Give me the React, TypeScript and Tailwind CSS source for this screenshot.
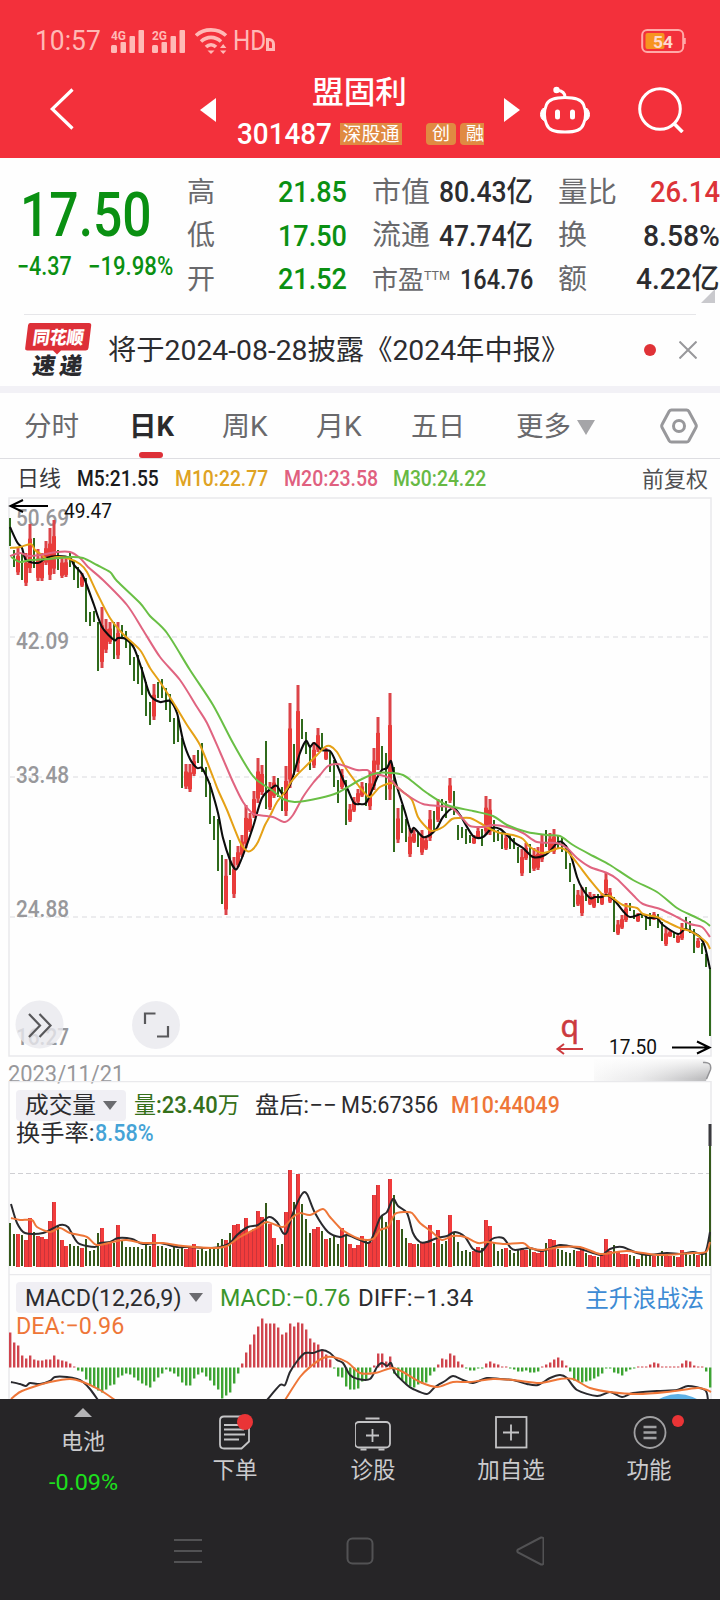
import { useLayoutEffect, useRef, useState } from "react";
import type { ReactNode } from "react";

// [high, low] of every candle
const CANDLES: [number, number][] = [
  [518, 546], [550, 567], [548, 575], [553, 580], [553, 586], [524, 573], [538, 568], [549, 581],
  [553, 581], [541, 565], [528, 580], [520, 574], [550, 570], [556, 578], [556, 577], [553, 567],
  [560, 580], [567, 588], [573, 587], [578, 622], [612, 626], [611, 622], [622, 671], [607, 668],
  [619, 653], [622, 644], [622, 659], [622, 659], [625, 637], [631, 648], [642, 665], [657, 681],
  [655, 684], [667, 695], [682, 716], [702, 725], [684, 720], [682, 698], [679, 698], [688, 710],
  [694, 722], [718, 744], [717, 742], [738, 788], [764, 789], [764, 792], [755, 776], [750, 763],
  [743, 772], [767, 797], [783, 824], [816, 840], [819, 871], [855, 904], [859, 915], [840, 875],
  [857, 898], [846, 867], [835, 857], [805, 848], [813, 832], [791, 818], [758, 803], [765, 795],
  [741, 809], [782, 810], [776, 798], [778, 797], [787, 811], [766, 816], [703, 788], [744, 775],
  [685, 772], [719, 739], [732, 754], [745, 770], [742, 768], [728, 752], [733, 748], [748, 760],
  [752, 772], [760, 787], [780, 803], [769, 789], [780, 825], [804, 822], [797, 812], [789, 803],
  [782, 797], [783, 806], [772, 810], [748, 790], [717, 770], [746, 770], [753, 800], [693, 800],
  [767, 852], [808, 843], [805, 833], [819, 842], [828, 857], [830, 843], [832, 847], [830, 855],
  [836, 850], [810, 841], [811, 830], [799, 822], [799, 811], [801, 818], [778, 803], [791, 815],
  [825, 840], [827, 838], [829, 844], [835, 843], [835, 844], [828, 838], [829, 846], [796, 835],
  [799, 835], [820, 842], [830, 841], [832, 849], [833, 850], [835, 849], [838, 849], [847, 863],
  [849, 876], [843, 860], [844, 873], [848, 871], [847, 870], [835, 862], [830, 847], [833, 852],
  [829, 854], [835, 848], [838, 852], [845, 869], [863, 882], [884, 907], [890, 906], [887, 916],
  [887, 901], [892, 905], [894, 908], [894, 903], [893, 905], [873, 895], [888, 903], [897, 932],
  [920, 935], [915, 929], [903, 922], [903, 911], [910, 919], [913, 922], [913, 918], [915, 930],
  [913, 926], [912, 920], [914, 928], [922, 941], [928, 946], [930, 937], [932, 938], [933, 943],
  [923, 940], [917, 930], [921, 933], [929, 953], [938, 948], [943, 954], [954, 967], [968, 1036],
];

const UP_DAYS = new Set([
  2, 4, 5, 7, 8, 9, 10, 11, 13, 14, 18, 23, 24, 25, 27, 36, 44, 45, 46, 54, 56, 57, 58, 59, 60, 61,
  62, 63, 65, 66, 69, 70, 72, 76, 77, 79, 83, 85, 86, 87, 88, 90, 91, 92, 95, 97, 100, 101, 103,
  104, 105, 107, 110, 116, 117, 119, 120, 124, 128, 129, 131, 132, 133, 135, 136, 142, 143, 145,
  146, 148, 149, 150, 152, 153, 154, 157, 161, 164, 165, 167, 168, 172,
]);

const VOLUMES = [
  43, 32, 33, 31, 27, 49, 34, 31, 30, 28, 46, 65, 40, 27, 21, 22, 20, 20, 19, 27, 15, 16, 33, 39,
  24, 24, 23, 42, 25, 19, 19, 19, 19, 17, 23, 20, 33, 20, 20, 18, 17, 19, 17, 19, 18, 21, 23, 16,
  17, 15, 17, 17, 23, 27, 27, 33, 42, 43, 37, 49, 35, 38, 56, 50, 63, 43, 29, 21, 22, 55, 97, 64,
  93, 62, 47, 33, 38, 40, 35, 28, 28, 30, 22, 39, 31, 23, 19, 22, 31, 27, 25, 72, 82, 50, 44, 88,
  71, 47, 37, 28, 24, 23, 22, 25, 25, 42, 23, 37, 22, 25, 52, 34, 24, 15, 16, 14, 16, 20, 18, 47,
  41, 24, 15, 17, 19, 16, 13, 16, 18, 17, 17, 15, 14, 18, 23, 28, 27, 17, 16, 14, 13, 16, 16, 20,
  13, 12, 11, 9, 12, 28, 16, 21, 15, 13, 13, 11, 10, 8, 11, 11, 11, 11, 10, 15, 12, 11, 10, 10, 17,
  12, 11, 12, 12, 12, 15, 142,
];

const MACD = [
  35, 25, 22, 12, 9, 12, 8, 7, 7, 8, 8, 12, 8, 7, 6, 4, 1, -3, -4, -12, -18, -20, -23, -25, -22,
  -18, -17, -10, -8, -6, -7, -10, -13, -16, -18, -20, -14, -10, -6, -2, -4, -6, -9, -15, -18, -18,
  -11, -7, -5, -9, -13, -18, -22, -31, -28, -25, -16, -6, 4, 15, 23, 33, 41, 49, 44, 44, 44, 40, 33,
  35, 44, 41, 45, 44, 38, 29, 25, 23, 18, 13, 8, -1, -9, -10, -19, -22, -22, -21, -14, -12, -5, 2,
  14, 14, 6, 11, -6, -10, -13, -17, -19, -20, -17, -16, -15, -8, -4, 3, 9, 8, 14, 12, 6, 3, -1, -3,
  -3, -1, -1, 4, 6, 4, 3, 1, 1, -1, -2, -4, -4, -3, -5, -5, -4, 1, 3, 5, 8, 10, 7, 2, -4, -13, -14,
  -15, -14, -13, -11, -9, -6, -1, -1, -5, -6, -8, -4, -2, -1, 1, 1, 1, 3, 5, 4, 1, 1, 1, 1, 1, 4, 7,
  6, 2, 1, 1, -4, -20,
];

const M5 =
  "10,527 17,542 22,548 26,560 38,563 46,558 58,556 70,558 74,565 82,574 86,583 94,605 102,627 114,640 118,638 126,639 134,648 142,670 150,695 160,702 170,701 177,713 183,740 190,759 197,768 202,768 208,780 211,788 218,813 223,838 230,860 235,869 238,867 245,850 253,827 262,798 273,787 277,786 283,794 290,785 294,773 300,753 306,741 310,747 314,743 322,750 330,751 335,760 342,777 348,790 354,803 360,804 366,803 373,788 377,778 382,770 387,768 391,761 394,775 398,790 405,812 411,832 414,828 423,837 430,835 437,828 443,817 453,808 460,815 473,836 483,837 492,828 500,829 507,835 515,843 523,848 533,857 543,856 550,851 557,843 562,842 570,853 577,877 582,888 590,898 595,897 602,897 607,895 615,901 623,911 630,917 642,914 648,918 657,918 663,925 678,934 685,929 692,932 700,937 705,947 710,969";
const M10 =
  "10,548 20,547 31,544 35,550 42,555 47,559 57,557 67,558 80,564 87,572 97,593 110,618 123,634 140,650 150,668 160,682 173,702 187,725 200,745 213,777 218,790 227,810 240,842 247,851 252,850 258,842 265,825 270,816 277,802 285,792 291,782 297,775 307,765 317,755 325,747 330,746 337,752 347,770 358,785 362,790 370,797 380,787 392,783 397,787 403,792 412,800 418,817 427,828 432,831 443,827 452,819 460,818 470,818 480,823 490,829 500,833 513,835 523,839 530,847 543,853 560,848 568,852 577,863 590,880 603,895 610,896 623,905 637,908 643,914 657,917 667,922 680,928 690,931 700,937 707,943 710,949";
const M20 =
  "10,556 20,553 28,556 40,555 57,552 70,552 80,558 88,567 103,580 127,605 143,630 160,657 180,680 197,707 207,723 220,752 233,782 243,802 252,813 258,815 273,817 285,822 293,815 303,797 313,783 320,775 328,766 337,764 345,766 357,770 367,770 372,773 387,777 393,782 397,787 410,797 423,804 438,806 452,808 463,819 470,826 483,827 493,825 507,827 523,833 537,842 557,843 567,848 577,858 590,867 607,873 617,879 633,895 643,904 660,909 677,917 690,924 702,927 710,937";
const M30 =
  "11,557 20,562 30,560 50,559 70,557 83,558 97,565 110,572 117,581 140,603 150,616 167,633 190,670 213,705 233,743 250,772 258,781 273,791 283,799 295,802 320,798 337,793 360,780 377,773 392,773 403,775 413,782 427,793 447,805 473,811 493,816 507,825 527,832 547,835 560,836 573,845 593,856 610,865 633,880 657,892 677,908 693,916 705,922 710,926";
const VOL5 =
  "11,1204 17,1223 25,1233 43,1233 60,1225 68,1227 78,1243 95,1247 100,1243 110,1242 118,1238 132,1239 143,1244 160,1243 177,1247 190,1247 207,1248 220,1247 230,1243 237,1235 248,1227 258,1225 269,1217 277,1222 283,1233 287,1232 293,1213 302,1194 307,1194 315,1213 328,1232 340,1237 347,1235 360,1240 370,1242 380,1218 387,1212 393,1199 398,1206 407,1213 413,1233 420,1242 427,1242 437,1238 447,1236 455,1232 465,1237 473,1249 482,1251 492,1239 503,1238 510,1247 515,1250 530,1248 542,1251 560,1245 577,1248 593,1253 602,1255 610,1249 622,1247 637,1253 648,1255 667,1253 680,1254 693,1252 705,1253 710,1232";
const VOL10 =
  "11,1218 20,1220 32,1220 37,1227 50,1232 60,1228 70,1233 87,1237 97,1245 117,1241 127,1240 143,1243 163,1243 183,1246 213,1248 227,1246 240,1237 257,1228 267,1222 283,1227 293,1217 300,1213 310,1215 323,1209 330,1217 340,1228 347,1233 360,1239 373,1239 380,1230 388,1227 395,1214 405,1212 412,1213 420,1223 432,1232 442,1240 453,1236 465,1237 478,1243 487,1242 503,1244 523,1243 530,1248 543,1250 560,1247 580,1247 600,1254 617,1252 627,1251 643,1253 660,1255 693,1253 706,1252 710,1242";
const DIFF = [
  "11,1382 20,1384 26,1386 30,1383 40,1384 50,1381 55,1377 67,1377 77,1379 83,1382 90,1389 98,1400",
  "267,1400 280,1385 285,1385 290,1372 298,1360 305,1353 313,1353 322,1350 330,1353 337,1360 343,1363 350,1375 358,1379 370,1379 377,1367 382,1363 387,1366 391,1363 395,1373 407,1385 413,1389 427,1394 435,1387 445,1381 453,1376 463,1380 473,1383 487,1378 500,1379 513,1380 527,1384 538,1385 550,1378 560,1375 567,1378 577,1390 597,1396 610,1392 622,1397 633,1393 657,1391 677,1390 688,1386 705,1390 708,1400",
];
const DEA = [
  "11,1399 20,1392 33,1387 50,1382 70,1379 83,1382 100,1390 115,1400",
  "285,1400 300,1377 310,1367 323,1358 333,1357 347,1362 360,1373 375,1373 392,1368 403,1372 420,1382 437,1387 453,1382 470,1382 493,1379 513,1380 540,1383 560,1379 573,1379 590,1388 610,1392 637,1394 667,1392 697,1388 707,1390 711,1392",
];

const dayX = (i: number) => 10 + i * 4;

// "x,y x,y ..." -> smooth path through every point
function smooth(points: string) {
  const p = points.split(" ").map((s) => s.split(",").map(Number));
  let d = `M${p[0][0]} ${p[0][1]}`;
  for (let i = 0; i < p.length - 1; i++) {
    const a = p[i - 1] ?? p[i];
    const b = p[i];
    const c = p[i + 1];
    const e = p[i + 2] ?? c;
    d += `C${b[0] + (c[0] - a[0]) / 7} ${b[1] + (c[1] - a[1]) / 7} ${c[0] - (e[0] - b[0]) / 7} ${c[1] - (e[1] - b[1]) / 7} ${c[0]} ${c[1]}`;
  }
  return d;
}

// Stretches one line of text to the width given in className.
function Fit({ className = "", children }: { className?: string; children: ReactNode }) {
  const box = useRef<HTMLSpanElement>(null);
  const text = useRef<HTMLSpanElement>(null);
  const [scale, setScale] = useState(1);
  useLayoutEffect(() => {
    if (box.current && text.current) {
      setScale(box.current.clientWidth / text.current.offsetWidth);
    }
  }, []);
  return (
    <span ref={box} className={`flex shrink-0 items-center leading-none ${className}`}>
      <span
        ref={text}
        className="shrink-0 origin-left whitespace-nowrap"
        style={{ transform: `scaleX(${scale})` }}
      >
        {children}
      </span>
    </span>
  );
}

function Line({ points, color, width = 2 }: { points: string; color: string; width?: number }) {
  return <path d={smooth(points)} fill="none" stroke={color} strokeWidth={width} strokeLinejoin="round" />;
}

function Signal({ label }: { label: string }) {
  return (
    <svg viewBox="0 0 34 26" className="h-[26px] w-[34px]" fill="#ffb9b6">
      <rect x="0" y="17" width="6" height="8" rx="1.5" />
      <rect x="9.500" y="14" width="5.500" height="11" rx="1" />
      <rect x="18.500" y="8" width="5.500" height="17" rx="1" />
      <rect x="27.500" y="2" width="5.500" height="23" rx="1" />
      <text x="0" y="11.500" fontSize="13" fontWeight="700" textLength="15" lengthAdjust="spacingAndGlyphs">
        {label}
      </text>
    </svg>
  );
}

function StatusBar() {
  return (
    <div className="flex h-[71px] items-center pt-[11px] pl-[35px] text-[28px] text-[#ffb9b6]">
      <Fit className="w-[66px]">10:57</Fit>
      <div className="ml-[10px] flex gap-[7px]">
        <Signal label="4G" />
        <Signal label="2G" />
      </div>
      <svg viewBox="0 0 34 26" className="ml-[9px] h-[26px] w-[34px]" fill="none" stroke="#ffb9b6" strokeWidth="3.600">
        <path d="M1 7.500C9 0 23 0 31 7.500" />
        <path d="M6 13.500C12 8 20 8 26 13.500" />
        <path d="M11 19c3-3 7-3 10 0" />
        <path d="M12.500 22.500h7L16 26z" fill="#ffb9b6" stroke="none" />
        <path d="M25 20l3.200-4 3.200 4zM25 22.500l3.200 3.500 3.200-3.500z" fill="#ffb9b6" stroke="none" />
      </svg>
      <Fit className="ml-[4px] w-[33px]">HD</Fit>
      <span className="mt-[6px] h-[13px] w-[9px] rounded-tr-md border-[3px] border-[#ffb9b6]" />
      <svg viewBox="0 0 46 26" className="ml-auto mr-[33px] h-[26px] w-[46px]">
        <rect x="1.200" y="2" width="41" height="22" rx="5" fill="none" stroke="#ffaaa8" strokeWidth="2" />
        <path d="M43.500 10v6" stroke="#ffaaa8" strokeWidth="2.500" />
        <rect x="4.500" y="5" width="19" height="16" rx="2" fill="#f79420" />
        <text x="12" y="19.500" fontSize="17" fontWeight="700" fill="#ffd9cf" textLength="20" lengthAdjust="spacingAndGlyphs">
          54
        </text>
      </svg>
    </div>
  );
}

function TitleBar() {
  return (
    <div className="flex h-[78px] items-center text-white">
      <svg viewBox="0 0 24 42" className="-mt-[3px] ml-[50px] h-[42px] w-6" fill="none" stroke="currentColor" strokeWidth="3.200">
        <path d="M22.500 1.500L2.200 21l20.300 19.500" />
      </svg>
      <svg viewBox="0 0 16 24" className="ml-[126px] h-6 w-4" fill="currentColor">
        <path d="M16 0v24L0 12z" />
      </svg>
      <div className="ml-[21px] flex h-[78px] w-[247px] flex-col">
        <div className="mt-[2px] flex h-[38px] items-center justify-center text-[31px] font-medium">
          <Fit className="mr-[3px] w-[95px]">盟固利</Fit>
        </div>
        <div className="mt-3 flex h-[22px] items-center">
          <Fit className="w-[95px] text-[29px] font-medium">301487</Fit>
          <span className="ml-2 flex h-[22px] w-[62px] items-center justify-center bg-[#e08a42] text-[19px] leading-none whitespace-nowrap">
            深股通
          </span>
          <span className="ml-6 flex h-[22px] w-[30px] items-center justify-center rounded-sm bg-[#e08a42] text-[18px] leading-none">
            创
          </span>
          <span className="ml-1 flex h-[22px] w-6 items-center overflow-hidden rounded-l-sm bg-[#e08a42] pl-[6px] text-[18px] leading-none">
            融
          </span>
        </div>
      </div>
      <svg viewBox="0 0 16 24" className="ml-5 h-6 w-4" fill="currentColor">
        <path d="M0 0v24l16-12z" />
      </svg>
      <svg viewBox="0 0 52 48" className="ml-[19px] h-12 w-[52px]" fill="none" stroke="currentColor" strokeWidth="3">
        <path d="M26 11.500c11 0 16.500 2 18.500 7 2.500 6 2.500 14 0 19.500C42.500 44 37 46 26 46S9.500 44 7.500 38c-2.500-5.500-2.500-13.500 0-19.500C9.500 13.500 15 11.500 26 11.500z" />
        <path d="M4.500 22c-4 3.500-4 9.500 0 12.500zM47.500 22c4 3.500 4 9.500 0 12.500z" fill="currentColor" strokeWidth="1" />
        <path d="M26 11.500c0-4-2.500-7-8-7" />
        <circle cx="17.500" cy="4" r="3.200" fill="currentColor" stroke="none" />
        <path d="M18.500 26v5M33.500 26v5" strokeWidth="5" strokeLinecap="round" />
      </svg>
      <svg viewBox="0 0 46 46" className="ml-[47px] h-[46px] w-[46px]" fill="none" stroke="currentColor" strokeWidth="3">
        <circle cx="22" cy="22" r="20.300" />
        <path d="M35.500 36l9 9" strokeWidth="3.600" />
      </svg>
    </div>
  );
}

function Quote() {
  return (
    <div className="relative flex h-[156px] pt-[13px]">
      <div className="flex w-[187px] flex-col text-[#0a9012]">
        <Fit className="mt-[21px] ml-[20px] h-[46px] w-[132px] text-[61px] font-medium">17.50</Fit>
        <div className="mt-[16px] flex h-6 items-center text-[25px]">
          <Fit className="ml-[17px] w-[55px] font-medium">−4.37</Fit>
          <Fit className="ml-4 w-[85px] font-medium">−19.98%</Fit>
        </div>
      </div>
      <div className="w-[160px]">
        {[["高", "21.85"], ["低", "17.50"], ["开", "21.52"]].map(([label, value]) => (
          <div key={label} className="flex h-[43.500px] items-center justify-between">
            <span className="text-[28px] leading-none text-[#69696c]">{label}</span>
            <Fit className="w-[69px] text-[29px] font-medium text-[#0a9012]">{value}</Fit>
          </div>
        ))}
      </div>
      <div className="ml-[25px] w-[161px] text-[29px] text-[#2c2c2f]">
        <div className="flex h-[43.500px] items-center justify-between">
          <Fit className="w-[58px] text-[28px] text-[#69696c]">市值</Fit>
          <Fit className="w-[94px] font-medium">80.43亿</Fit>
        </div>
        <div className="flex h-[43.500px] items-center justify-between">
          <Fit className="w-[58px] text-[28px] text-[#69696c]">流通</Fit>
          <Fit className="w-[94px] font-medium">47.74亿</Fit>
        </div>
        <div className="flex h-[43.500px] items-center">
          <Fit className="w-[52px] text-[26px] text-[#69696c]">市盈</Fit>
          <Fit className="mb-2 w-[26px] text-[13px] text-[#69696c]">TTM</Fit>
          <Fit className="ml-auto w-[73px] text-[28px] font-medium">164.76</Fit>
        </div>
      </div>
      <div className="ml-[25px] w-[162px] text-[29px] text-[#2c2c2f]">
        <div className="flex h-[43.500px] items-center justify-between">
          <Fit className="w-[59px] text-[28px] text-[#69696c]">量比</Fit>
          <Fit className="w-[70px] font-medium text-[#dc3338]">26.14</Fit>
        </div>
        <div className="flex h-[43.500px] items-center justify-between">
          <Fit className="w-[29px] text-[28px] text-[#69696c]">换</Fit>
          <Fit className="w-[77px] font-medium">8.58%</Fit>
        </div>
        <div className="flex h-[43.500px] items-center justify-between">
          <Fit className="w-[29px] text-[28px] text-[#69696c]">额</Fit>
          <Fit className="w-[84px] font-medium">4.22亿</Fit>
        </div>
      </div>
      <svg viewBox="0 0 14 14" className="absolute right-[5px] bottom-[11px] h-[14px] w-[14px]">
        <path d="M14 0v14H0z" fill="#c9c9cd" />
      </svg>
    </div>
  );
}

function News() {
  return (
    <div className="flex h-[72px] items-center">
      <svg viewBox="0 0 68 56" className="ml-6 h-[56px] w-[68px]">
        <path d="M6 1h59q2.500 0 2.200 2.500L64.500 26q-.4 2.500-3 2.500H37l-4 4-4-4H3.500Q.8 28.500 1.200 26L4 3.500Q4.300 1 6 1z" fill="#dd3038" />
        <g fontWeight="900" transform="skewX(-8)">
          <text x="11" y="22" fontSize="18" fill="#fff" textLength="51" lengthAdjust="spacingAndGlyphs">
            同花顺
          </text>
          <text x="15" y="52.500" fontSize="23" fill="#2a2a2e" textLength="50" lengthAdjust="spacing">
            速递
          </text>
        </g>
      </svg>
      <Fit className="ml-4 pt-[2px] w-[461px] text-[28px] text-[#2c2c2f]">将于2024-08-28披露《2024年中报》</Fit>
      <span className="ml-[75px] h-3 w-3 rounded-full bg-[#e03237]" />
      <svg viewBox="0 0 18 18" className="ml-[23px] h-[18px] w-[18px]" stroke="#98989b" strokeWidth="2">
        <path d="M.5.5l17 17M17.500.5l-17 17" />
      </svg>
    </div>
  );
}

function Tabs() {
  return (
    <div className="flex h-[66px] items-center border-b border-[#dedee2] pt-[3px] text-[27.500px] text-[#69696c]">
      <Fit className="ml-[24px] w-[55px]">分时</Fit>
      <div className="relative ml-[50px] flex h-full items-center font-bold text-[#2a2a2d]">
        <Fit className="w-[45px]">日K</Fit>
        <span className="absolute bottom-0 left-[10px] h-[6px] w-6 rounded-full bg-[#dd3038]" />
      </div>
      <Fit className="ml-[48px] w-[46px]">周K</Fit>
      <Fit className="ml-[48px] w-[46px]">月K</Fit>
      <Fit className="ml-[49px] w-[54px]">五日</Fit>
      <Fit className="ml-[51px] w-[55px]">更多</Fit>
      <svg viewBox="0 0 18 15" className="ml-[6px] h-[15px] w-[18px]">
        <path d="M0 0h18L9 15z" fill="#a5a5a8" />
      </svg>
      <svg viewBox="0 0 38 36" className="ml-[65px] mb-[3px] h-9 w-[38px]" fill="none" stroke="#98989b" strokeWidth="3">
        <path d="M11.500 2h15q1.500 0 2.300 1.300l7 13q1 1.700 0 3.400l-7 13Q28 34 26.500 34h-15q-1.500 0-2.300-1.300l-7-13q-1-1.700 0-3.400l7-13Q10 2 11.500 2z" />
        <circle cx="19" cy="18" r="5.500" />
      </svg>
    </div>
  );
}

function PriceChart() {
  return (
    <svg viewBox="0 497 720 560" className="block h-[560px] w-[720px]">
      <rect x="9" y="498" width="702" height="558" fill="none" stroke="#e9e9ec" strokeWidth="1.500" />
      <path d="M10 637H710M10 777H710M10 917H710" stroke="#e6e6e9" strokeWidth="1.500" strokeDasharray="5 4" />
      <g fontSize="23.500" fill="#98989b" fontWeight="500">
        {[["50.69", 526], ["42.09", 649], ["33.48", 782.5], ["24.88", 916.5], ["16.27", 1045]].map(([label, y]) => (
          <text key={label} x="16" y={y} textLength="53" lengthAdjust="spacingAndGlyphs">
            {label}
          </text>
        ))}
      </g>
      {CANDLES.map(([high, low], i) =>
        UP_DAYS.has(i) ? (
          <g key={i}>
            <rect x={dayX(i) - 1.5} y={high} width="3" height={low - high} fill="#dc4449" />
            <rect
              x={dayX(i) - 2}
              y={high + (low - high) * 0.3}
              width="4"
              height={(low - high) * 0.6}
              fill="#e93c3a"
            />
          </g>
        ) : (
          <rect key={i} x={dayX(i) - 1} y={high} width="2" height={low - high} fill="#2f6a1c" />
        ),
      )}
      <Line points={M5} color="#0c0c0c" width={2.1} />
      <Line points={M10} color="#e5a116" />
      <Line points={M20} color="#e06480" />
      <Line points={M30} color="#69bf45" />
      <g stroke="#000" strokeWidth="2" fill="none">
        <path d="M48 506H11M23 500L10.500 506 23 512" />
        <path d="M672 1047.500h37M697 1041.500l12.500 6-12.500 6" />
      </g>
      <g fontSize="19.500" fill="#111">
        <text x="64" y="518" textLength="48" lengthAdjust="spacingAndGlyphs">49.47</text>
        <text x="609" y="1053.500" textLength="48" lengthAdjust="spacingAndGlyphs">17.50</text>
      </g>
      <text x="560.500" y="1037" fontSize="30" fill="#cc3a3e" stroke="#cc3a3e" strokeWidth="0.500" className="font-['Noto_Sans']">q</text>
      <path d="M583 1049h-25M564 1044l-6.500 5 6.500 5" stroke="#cc3a3e" strokeWidth="2" fill="none" />
      <g fill="#e9e8ed" fillOpacity="0.8">
        <circle cx="39.500" cy="1024.500" r="24" />
        <circle cx="156" cy="1025" r="24" />
      </g>
      <g stroke="#58585b" strokeWidth="2.200" fill="none">
        <path d="M29 1014l11 11.500-11 11.500M39.500 1014l11 11.500-11 11.500" />
        <path d="M145 1024v-10.500h10.500M168 1026v10.500h-11" />
      </g>
    </svg>
  );
}

function Pill({ children }: { children: ReactNode }) {
  return (
    <div className="flex h-[31px] items-center rounded bg-[#f0eff4] px-[9px]">
      {children}
      <svg viewBox="0 0 14 9" className="ml-[7px] h-[9px] w-[14px]">
        <path d="M0 0h14L7 9z" fill="#6b6b6f" />
      </svg>
    </div>
  );
}

function VolumePanel() {
  return (
    <div className="relative h-[193px] text-[23px] text-[#2c2c2f]">
      <svg viewBox="0 1081 720 193" className="absolute inset-0 h-[193px] w-[720px]">
        <path d="M9 1274V1081.500H711V1274" fill="none" stroke="#e9e9ec" strokeWidth="1.500" />
        <path d="M10 1173.500H710" stroke="#cfcfd3" strokeDasharray="5 3" />
        {VOLUMES.map((v, i) =>
          UP_DAYS.has(i) ? (
            <g key={i}>
              <rect x={dayX(i) - 2} y={1267 - v} width="4" height={v} fill="#f23c3c" />
              <rect x={dayX(i) - 2} y={1267 - v} width="1" height={v} fill="#c9343a" />
            </g>
          ) : (
            <rect key={i} x={dayX(i) - 1} y={1266 - v} width="2" height={v} fill="#34591a" />
          ),
        )}
        <rect x="708.500" y="1124" width="3" height="22" fill="#3a3a3e" />
        <Line points={VOL5} color="#2a2a2e" />
        <Line points={VOL10} color="#ee7638" />
      </svg>
      <div className="relative flex items-center pt-[9px] pl-4">
        <Pill>
          <Fit className="w-[71px]">成交量</Fit>
        </Pill>
        <Fit className="ml-[8px] w-[106px] text-[#35701a]">
          量<b className="font-medium">:23.40</b>万
        </Fit>
        <Fit className="ml-[15px] w-[82px]">盘后:−−</Fit>
        <Fit className="ml-[4px] w-[97px]">M5:67356</Fit>
        <Fit className="ml-[13px] w-[109px] font-medium text-[#ee7638]">M10:44049</Fit>
      </div>
      <div className="relative flex h-[25px] items-center pl-4">
        <Fit className="w-[79px]">换手率:</Fit>
        <Fit className="w-[59px] font-medium text-[#45a3d6]">8.58%</Fit>
      </div>
    </div>
  );
}

function MacdPanel() {
  return (
    <div className="relative h-[125px] overflow-hidden text-[24px] text-[#2c2c2f]">
      <svg viewBox="0 1274 720 125" className="absolute inset-0 h-[125px] w-[720px]">
        <path d="M9 1399V1274.500H711V1399" fill="none" stroke="#e9e9ec" strokeWidth="1.500" />
        {MACD.map((v, i) => (
          <rect
            key={i}
            x={dayX(i) - 1}
            y={v > 0 ? 1367.5 - v : 1367.5}
            width="2.400"
            height={Math.abs(v)}
            fill={v > 0 ? "#d0444d" : "#3da433"}
          />
        ))}
        {DIFF.map((p) => (
          <Line key={p} points={p} color="#2a2a2e" />
        ))}
        {DEA.map((p) => (
          <Line key={p} points={p} color="#ee7638" />
        ))}
        <circle cx="678" cy="1432" r="38" fill="#5db1e6" />
      </svg>
      <div className="relative flex items-center pt-[8px] pl-4">
        <Pill>
          <Fit className="w-[157px]">MACD(12,26,9)</Fit>
        </Pill>
        <Fit className="ml-[8px] w-[130px] text-[#3a962c]">MACD:−0.76</Fit>
        <Fit className="ml-[8px] w-[115px]">DIFF:−1.34</Fit>
        <Fit className="ml-auto mr-[16px] w-[119px] pt-[2px] text-[#3d8bd4]">主升浪战法</Fit>
      </div>
      <div className="relative flex h-[25px] items-center pl-4">
        <Fit className="w-[108px] text-[#ee7638]">DEA:−0.96</Fit>
      </div>
    </div>
  );
}

function NavItem({ label, icon, dot }: { label: string; icon: ReactNode; dot?: ReactNode }) {
  return (
    <div className="flex w-[138px] flex-col items-center">
      <div className="relative mt-[16px] h-9 w-9">
        <svg viewBox="0 0 36 36" className="h-9 w-9" fill="none" stroke="#c4c4c6" strokeWidth="1.800">
          {icon}
        </svg>
        {dot}
      </div>
      <span className="mt-[7px] text-[22.500px] leading-[24px] text-[#cbcbcd]">{label}</span>
    </div>
  );
}

function BottomNav() {
  return (
    <div className="flex h-[101px]">
      <div className="flex w-[166px] flex-col items-center">
        <svg viewBox="0 0 18 9" className="mt-[9px] h-[9px] w-[18px]">
          <path d="M9 0l9 9H0z" fill="#b4b4b6" />
        </svg>
        <span className="mt-[13px] text-[22px] leading-[24px] text-[#cbcbcd]">电池</span>
        <Fit className="mt-[18px] w-[69px] text-[22px] text-[#1de01d]">-0.09%</Fit>
      </div>
      <NavItem
        label="下单"
        icon={
          <>
            <path d="M24 1.500H7Q3 1.500 3 5.500v24q0 4 4 4h17.500l7.500-7V10" />
            <path d="M7 10h15M7 14.500h20M7 19.500h21M7 24.500h15" />
          </>
        }
        dot={<span className="absolute -top-[1px] left-[20px] h-4 w-4 rounded-full bg-[#ea3436]" />}
      />
      <NavItem
        label="诊股"
        icon={
          <>
            <rect x="0" y="7" width="35" height="25.500" rx="4" />
            <path d="M10.500 3.500h14M17.500 14v13M11 20.500h13M5.500 34.500h6M23.500 34.500h6" />
          </>
        }
      />
      <NavItem
        label="加自选"
        icon={
          <>
            <rect x="3" y="2" width="30.500" height="30.500" />
            <path d="M18 9.500v16M10 17.500h16" />
          </>
        }
      />
      <NavItem
        label="功能"
        icon={
          <>
            <circle cx="19" cy="17.500" r="15.500" stroke="#a0a0a2" />
            <path d="M12.500 12h13M12.500 17.500h13M12.500 23h13" stroke="#a0a0a2" strokeWidth="2.500" />
          </>
        }
        dot={<span className="absolute top-0 left-[41px] h-3 w-3 rounded-full bg-[#ea3436]" />}
      />
    </div>
  );
}

function SystemNav() {
  return (
    <div className="flex h-[100px] items-center pt-[2px] pl-[174px]">
      <svg viewBox="0 0 28 26" className="h-[26px] w-7" stroke="#525254" strokeWidth="2">
        <path d="M0 2h28M0 13h28M0 24h28" />
      </svg>
      <svg viewBox="0 0 28 28" className="ml-[144px] h-7 w-7" fill="none" stroke="#525254" strokeWidth="2">
        <rect x="1.500" y="1.500" width="25" height="25" rx="5" />
      </svg>
      <svg viewBox="0 0 28 30" className="ml-[142px] h-[30px] w-7" fill="none" stroke="#525254" strokeWidth="2">
        <path d="M25 1.500L2 13.500q-1.500 1.500 0 3l23 12q2.500.5 2.500-2v-23q0-2.500-2.500-2z" />
      </svg>
    </div>
  );
}

export default function App() {
  return (
    <div className="h-[1600px] w-[720px] overflow-hidden bg-[#fefefe] font-[Roboto,'Noto_Sans_CJK_SC',sans-serif]">
      <header className="h-[158px] bg-[#f3303b]">
        <StatusBar />
        <TitleBar />
      </header>
      <Quote />
      <div className="mr-6 ml-6 h-px bg-[#e6e6e9]" />
      <div className="-mt-px">
        <News />
      </div>
      <div className="h-[7px] bg-[#f2f1f6]" />
      <Tabs />
      <div className="flex h-[38px] items-center pt-[2px] text-[22px] font-medium">
        <Fit className="ml-[17px] w-[44px] text-[21.500px] font-normal text-[#3a3a3d]">日线</Fit>
        <Fit className="ml-[16px] w-[82px] text-[#1a1a1c]">M5:21.55</Fit>
        <Fit className="ml-[16px] w-[93px] text-[#dfa323]">M10:22.77</Fit>
        <Fit className="ml-[16px] w-[94px] text-[#e0607f]">M20:23.58</Fit>
        <Fit className="ml-[15px] w-[93px] text-[#67b944]">M30:24.22</Fit>
        <Fit className="ml-auto mr-[12px] w-[66px] pt-[1px] font-normal text-[#505053]">前复权</Fit>
      </div>
      <PriceChart />
      <div className="flex h-6 items-center justify-between pl-[8px] text-[23px] text-[#98989b]">
        <Fit className="w-[116px] pt-[10px]">2023/11/21</Fit>
        <svg viewBox="0 0 118 24" className="mr-[8px] h-6 w-[118px]">
          <defs>
            <linearGradient id="fade" x1="0" x2="1" y1="0" y2="0">
              <stop offset="0" stopColor="#c4c4c6" stopOpacity="0.1" />
              <stop offset="0.400" stopColor="#c4c4c6" stopOpacity="0.35" />
              <stop offset="1" stopColor="#b4b4b6" stopOpacity="0.95" />
            </linearGradient>
            <linearGradient id="veil" x1="0" x2="0" y1="0" y2="1">
              <stop offset="0" stopColor="#fefefe" />
              <stop offset="0.900" stopColor="#fefefe" stopOpacity="0" />
            </linearGradient>
          </defs>
          <path d="M0 2h108q9 3 8 10l-4 12H0z" fill="url(#fade)" />
          <path d="M0 0h118v24H0z" fill="url(#veil)" />
          <path d="M109 5.500q9-1 7.500 7L112.500 22" fill="none" stroke="#939396" strokeWidth="1.500" />
        </svg>
      </div>
      <VolumePanel />
      <MacdPanel />
      <footer className="h-[201px] bg-[#262527]">
        <BottomNav />
        <SystemNav />
      </footer>
    </div>
  );
}
